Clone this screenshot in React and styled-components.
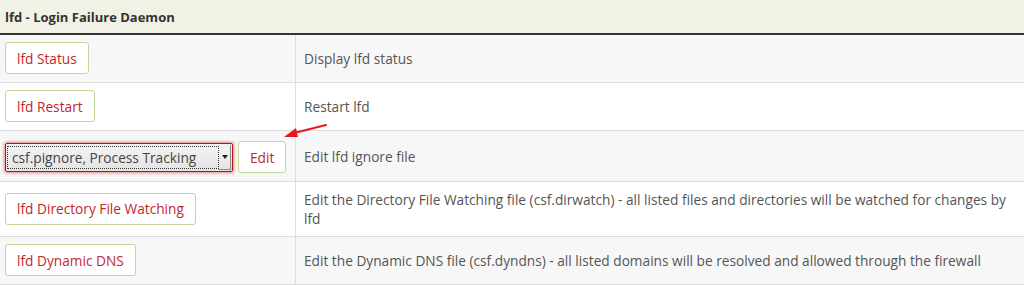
import React from 'react';
import styled, { createGlobalStyle } from 'styled-components';

const GlobalStyle = createGlobalStyle`
  html, body {
    margin: 0;
    padding: 0;
    background: #fff;
  }
  body {
    font-family: "Open Sans", "Liberation Sans", sans-serif;
    font-size: 13.7px;
    color: #555;
  }
`;

const Wrapper = styled.div`
  position: relative;
  width: 1024px;
`;

const Table = styled.table`
  width: 100%;
  border-collapse: collapse;
  border-spacing: 0;
`;

const HeadCell = styled.th`
  background: #f2f1e6;
  color: #333;
  font-weight: 700;
  font-size: 13px;
  text-align: left;
  height: 33px;
  padding: 0 5px;
  border-bottom: 2px solid #333;
`;

const Row = styled.tr`
  background: ${p => (p.$odd ? '#f7f7f7' : '#fff')};
  border-bottom: 1px solid #dddddd;
`;

const ActionCell = styled.td`
  width: 285px;
  padding: ${p => (p.$tall ? '10px 5px 8px 3px' : '7px 5px 8px 5px')};
  border-right: 1px solid #dddddd;
  vertical-align: middle;
`;

const InfoCell = styled.td`
  padding: 8px 10px 8px 8px;
  line-height: 19px;
  vertical-align: middle;
  color: #555;
`;

const Inline = styled.div`
  display: flex;
  align-items: center;
  gap: 5px;
`;

const Button = styled.button`
  font-family: "Open Sans", "Liberation Sans", sans-serif;
  font-size: 13.7px;
  color: #c1272d;
  background: #fff;
  border: 1px solid #c4d69a;
  border-radius: 3px;
  height: 32px;
  padding: 0 11px;
  cursor: pointer;
`;

const Select = styled.div`
  position: relative;
  width: 228px;
  height: 29px;
  margin-left: 2px;
  box-sizing: border-box;
  border: 1px solid #b3131b;
  border-radius: 2px;
  box-shadow: 0 0 3px 1px rgba(210, 40, 40, 0.55);
  background: linear-gradient(#f4f4f4, #e4e4e4);
  display: flex;
  align-items: stretch;
`;

const SelectText = styled.div`
  flex: 1;
  margin: 2px 0 2px 1px;
  border: 1px dotted #333;
  display: flex;
  align-items: center;
  padding-left: 4px;
  color: #444;
  font-size: 13.7px;
  white-space: nowrap;
  overflow: hidden;
`;

const Caret = styled.div`
  width: 12px;
  margin: 1px 1px 1px 0;
  box-shadow: inset -1px -1px 0 #8a8a8a;
  display: flex;
  align-items: center;
  justify-content: center;
  &::after {
    content: '';
    border-left: 3px solid transparent;
    border-right: 3px solid transparent;
    border-top: 4px solid #222;
  }
`;

const Arrow = styled.svg`
  position: absolute;
  left: 280px;
  top: 118px;
  pointer-events: none;
`;

const rows = [
  { label: 'lfd Status', info: 'Display lfd status' },
  { label: 'lfd Restart', info: 'Restart lfd' },
  { select: 'csf.pignore, Process Tracking', label: 'Edit', info: 'Edit lfd ignore file' },
  {
    label: 'lfd Directory File Watching',
    info: 'Edit the Directory File Watching file (csf.dirwatch) - all listed files and directories will be watched for changes by lfd',
  },
  {
    label: 'lfd Dynamic DNS',
    info: 'Edit the Dynamic DNS file (csf.dyndns) - all listed domains will be resolved and allowed through the firewall',
  },
];

export default function App() {
  return (
    <Wrapper>
      <GlobalStyle />
      <Table>
        <thead>
          <tr>
            <HeadCell colSpan={2}>lfd - Login Failure Daemon</HeadCell>
          </tr>
        </thead>
        <tbody>
          {rows.map((r, i) => (
            <Row key={i} $odd={i % 2 === 0}>
              <ActionCell $tall={!!r.select}>
                {r.select ? (
                  <Inline>
                    <Select>
                      <SelectText>{r.select}</SelectText>
                      <Caret />
                    </Select>
                    <Button>{r.label}</Button>
                  </Inline>
                ) : (
                  <Button>{r.label}</Button>
                )}
              </ActionCell>
              <InfoCell>{r.info}</InfoCell>
            </Row>
          ))}
        </tbody>
      </Table>
      <Arrow width="50" height="24" viewBox="0 0 50 24">
        <line x1="46" y1="7" x2="14" y2="15" stroke="#e8191c" strokeWidth="2" strokeLinecap="round" />
        <polygon points="4,19 16,10 18,19" fill="#e8191c" />
      </Arrow>
    </Wrapper>
  );
}
